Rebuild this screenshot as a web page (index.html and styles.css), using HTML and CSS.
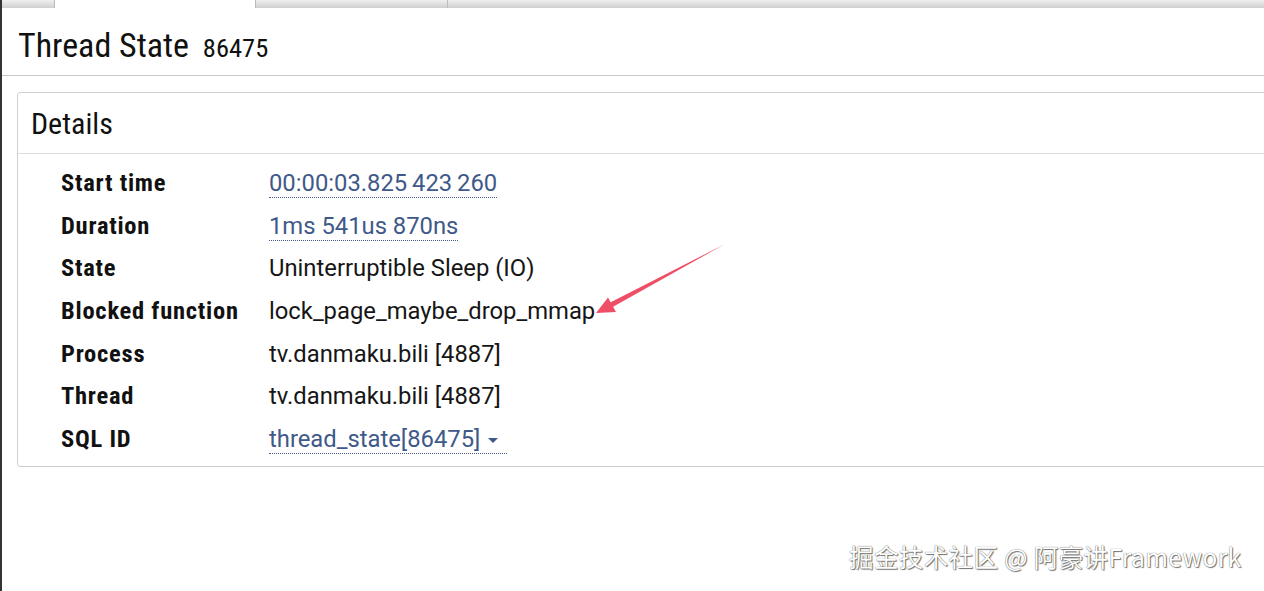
FILE: index.html
```html
<!DOCTYPE html>
<html lang="en">
<head>
<meta charset="utf-8">
<title>Thread State</title>
<link rel="stylesheet" href="styles.css">
</head>
<body>
<div class="app">
  <div class="edge"></div>
  <div class="main">
    <div class="tabs">
      <div class="tab t1"></div>
      <div class="tab active"></div>
      <div class="tab t3"></div>
      <div class="tab rest"></div>
    </div>
    <div class="title-bar">
      <h1 class="title">Thread State <span class="title-id">86475</span></h1>
    </div>
    <section class="panel">
      <header class="panel-head">Details</header>
      <div class="rows">
        <div class="row"><span class="label">Start time</span><span class="value"><span class="link">00:00:03.825&#8201;423&#8201;260</span></span></div>
        <div class="row"><span class="label">Duration</span><span class="value"><span class="link">1ms 541us 870ns</span></span></div>
        <div class="row"><span class="label">State</span><span class="value">Uninterruptible Sleep (IO)</span></div>
        <div class="row"><span class="label">Blocked function</span><span class="value">lock_page_maybe_drop_mmap</span></div>
        <div class="row"><span class="label">Process</span><span class="value">tv.danmaku.bili [4887]</span></div>
        <div class="row"><span class="label">Thread</span><span class="value">tv.danmaku.bili [4887]</span></div>
        <div class="row"><span class="label">SQL ID</span><span class="value"><span class="link">thread_state[86475] <span class="caret"></span></span></span></div>
      </div>
    </section>
  </div>
</div>
<svg class="arrow" width="1264" height="591" viewBox="0 0 1264 591">
  <polygon points="596,313 608,297.4 610.7,302.3 725,244 613.1,306.7 616,312" fill="#ef4f66"/>
</svg>
<div class="watermark">掘金技术社区 @ 阿豪讲Framework</div>
</body>
</html>
```
FILE: styles.css
```css
html, body {
  margin: 0;
  padding: 0;
  background: #fff;
  overflow: hidden;
}
body {
  width: 1264px;
  height: 591px;
  position: relative;
  font-family: Roboto, "Liberation Sans", sans-serif;
  color: #141414;
}
.app {
  display: flex;
  height: 591px;
}
.edge {
  width: 2px;
  background: #333;
  flex: none;
}
.main {
  flex: 1;
  overflow: hidden;
}
.tabs {
  display: flex;
  height: 8px;
}
.tab {
  height: 8px;
  background: linear-gradient(#efefef, #cfcfcf);
  box-sizing: border-box;
}
.t1 { width: 53px; border-right: 1px solid #bbb; }
.active { width: 200px; background: #fff; }
.t3 { width: 193px; border-left: 1px solid #bbb; border-right: 1px solid #bbb; }
.rest { flex: 1; }
.title-bar {
  height: 68px;
  border-bottom: 1px solid #c8c8c8;
  box-sizing: border-box;
  padding-left: 16px;
}
.title {
  margin: 0;
  font-weight: 400;
  font-size: 34px;
  font-stretch: condensed;
  line-height: 68px;
  padding-top: 3px;
  height: 67px;
  box-sizing: border-box;
  color: #111;
}
.title-id {
  font-size: 26.5px;
  margin-left: 6px;
}
.panel {
  margin: 16px -20px 0 15px;
  border: 1px solid #cfcfcf;
  border-radius: 3px;
}
.panel-head {
  height: 61px;
  line-height: 62px;
  box-sizing: border-box;
  border-bottom: 1px solid #ddd;
  padding-left: 13px;
  font-size: 30px;
  font-stretch: condensed;
  color: #111;
}
.rows {
  padding: 8px 0 5px 43px;
}
.row {
  display: flex;
  height: 42.67px;
  line-height: 42.67px;
  font-size: 24px;
}
.label {
  width: 208px;
  flex: none;
  font-weight: 700;
  font-stretch: condensed;
  font-size: 24.5px;
  letter-spacing: 0.75px;
  color: #111;
}
.value {
  color: #161616;
  font-size: 23.8px;
}
.link {
  color: #3f5989;
  border-bottom: 1px dotted #3f5989;
}
.caret {
  display: inline-block;
  width: 0;
  height: 0;
  border-left: 5px solid transparent;
  border-right: 5px solid transparent;
  border-top: 5px solid #3f5989;
  vertical-align: middle;
  margin-left: 2px;
  margin-right: 9px;
}
.arrow {
  position: absolute;
  left: 0;
  top: 0;
  pointer-events: none;
}
.watermark {
  position: absolute;
  left: 849px;
  top: 540px;
  font-family: "Noto Sans CJK SC", "Noto Sans", sans-serif;
  font-size: 24.5px;
  letter-spacing: 0.4px;
  line-height: 34px;
  color: #fff;
  text-shadow: 0 0 1px #444, 1px 1px 1px #777;
  white-space: nowrap;
}
```
